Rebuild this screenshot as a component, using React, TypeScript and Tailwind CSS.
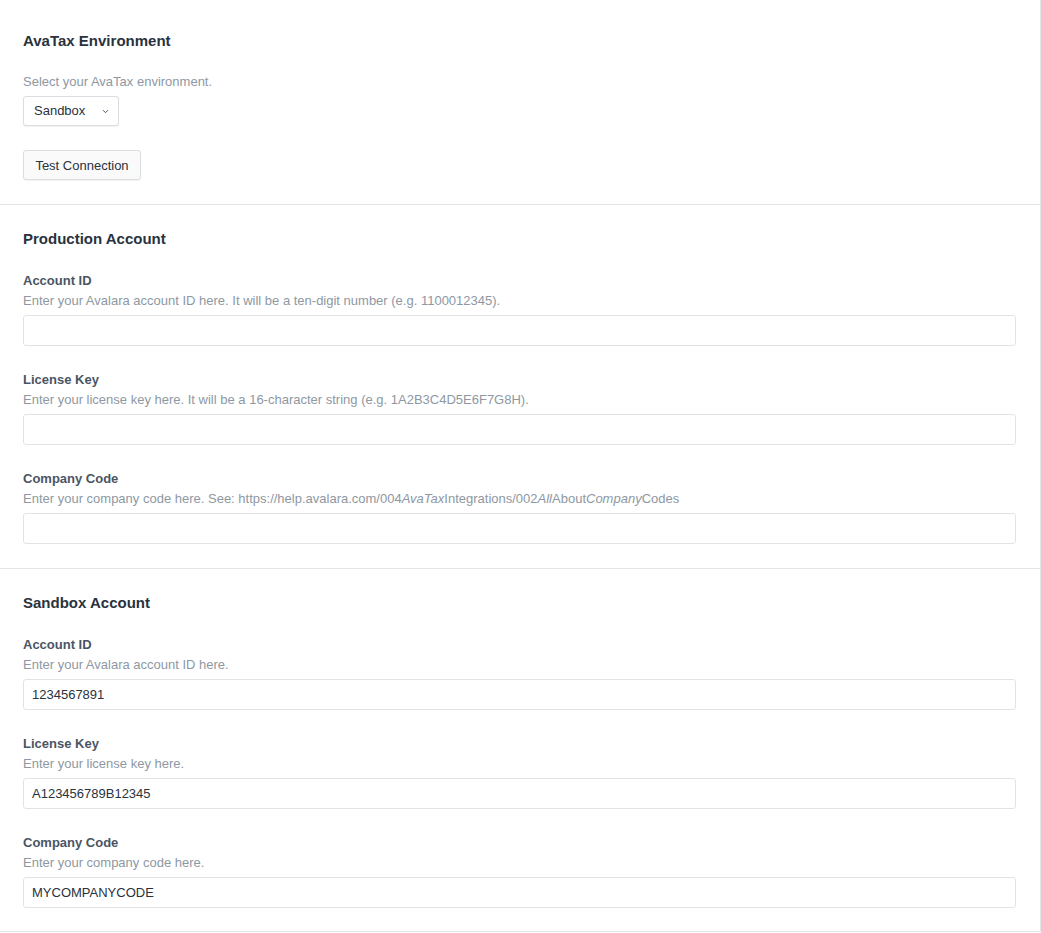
import React from "react";

const FONT = { fontFamily: '"Liberation Sans", Arial, sans-serif' };

interface Field {
  label: string;
  help: React.ReactNode;
  value: string;
}

const PRODUCTION: Field[] = [
  { label: "Account ID", help: "Enter your Avalara account ID here. It will be a ten-digit number (e.g. 1100012345).", value: "" },
  { label: "License Key", help: "Enter your license key here. It will be a 16-character string (e.g. 1A2B3C4D5E6F7G8H).", value: "" },
  {
    label: "Company Code",
    help: (
      <>
        Enter your company code here. See: https://help.avalara.com/004<i>AvaTax</i>Integrations/002<i>All</i>About<i>Company</i>Codes
      </>
    ),
    value: "",
  },
];

const SANDBOX: Field[] = [
  { label: "Account ID", help: "Enter your Avalara account ID here.", value: "1234567891" },
  { label: "License Key", help: "Enter your license key here.", value: "A123456789B12345" },
  { label: "Company Code", help: "Enter your company code here.", value: "MYCOMPANYCODE" },
];

function FieldRow({ field, first }: { field: Field; first: boolean }) {
  return (
    <div className={first ? "mt-[23px]" : "mt-[25px]"}>
      <div className="text-[13px] leading-[18px] font-bold text-[#4a5563]">{field.label}</div>
      <div className="mt-[2px] text-[13px] leading-[18px] text-[#8e98a2]">{field.help}</div>
      <input
        readOnly
        value={field.value}
        className="mt-[5px] block w-[993px] h-[31px] px-[8px] rounded-[3px] border border-[#e1e4e7] bg-white text-[13px] text-[#29323d] outline-none"
        style={FONT}
      />
    </div>
  );
}

function AccountSection({ title, fields, last }: { title: string; fields: Field[]; last?: boolean }) {
  return (
    <section className={`pt-[24px] px-[23px] ${last ? "pb-[23px]" : "pb-[24px] border-b border-[#e3e5e8]"}`}>
      <h2 className="text-[15px] leading-[20px] font-bold text-[#29323d]">{title}</h2>
      {fields.map((f, i) => (
        <FieldRow key={f.label} field={f} first={i === 0} />
      ))}
    </section>
  );
}

export default function App() {
  return (
    <div className="w-[1041px] min-h-[933px] bg-white" style={FONT}>
      <div className="w-[1041px] bg-white border-r border-b border-[#e3e5e8]">
        <section className="pt-[31px] px-[23px] pb-[24px] border-b border-[#e3e5e8]">
          <h2 className="text-[15px] leading-[20px] font-bold text-[#29323d]">AvaTax Environment</h2>
          <div className="mt-[22px] text-[13px] leading-[18px] text-[#8e98a2]">Select your AvaTax environment.</div>
          <div className="mt-[5px] w-[96px] h-[30px] flex items-center justify-between pl-[10px] pr-[9px] rounded-[3px] border border-[#dadde1] bg-white shadow-[0_1px_1px_rgba(0,0,0,0.06)]">
            <span className="text-[13px] text-[#29323d]">Sandbox</span>
            <svg width="7" height="5" viewBox="0 0 7 5" fill="none">
              <path d="M1 1.2L3.5 3.7L6 1.2" stroke="#555" strokeWidth="1" />
            </svg>
          </div>
          <button className="mt-[24px] w-[118px] h-[30px] pt-[1px] rounded-[3px] border border-[#dadde1] bg-[#fafafa] text-[13px] text-[#29323d] shadow-[0_1px_1px_rgba(0,0,0,0.05)]">
            Test Connection
          </button>
        </section>
        <AccountSection title="Production Account" fields={PRODUCTION} />
        <AccountSection title="Sandbox Account" fields={SANDBOX} last />
      </div>
    </div>
  );
}
